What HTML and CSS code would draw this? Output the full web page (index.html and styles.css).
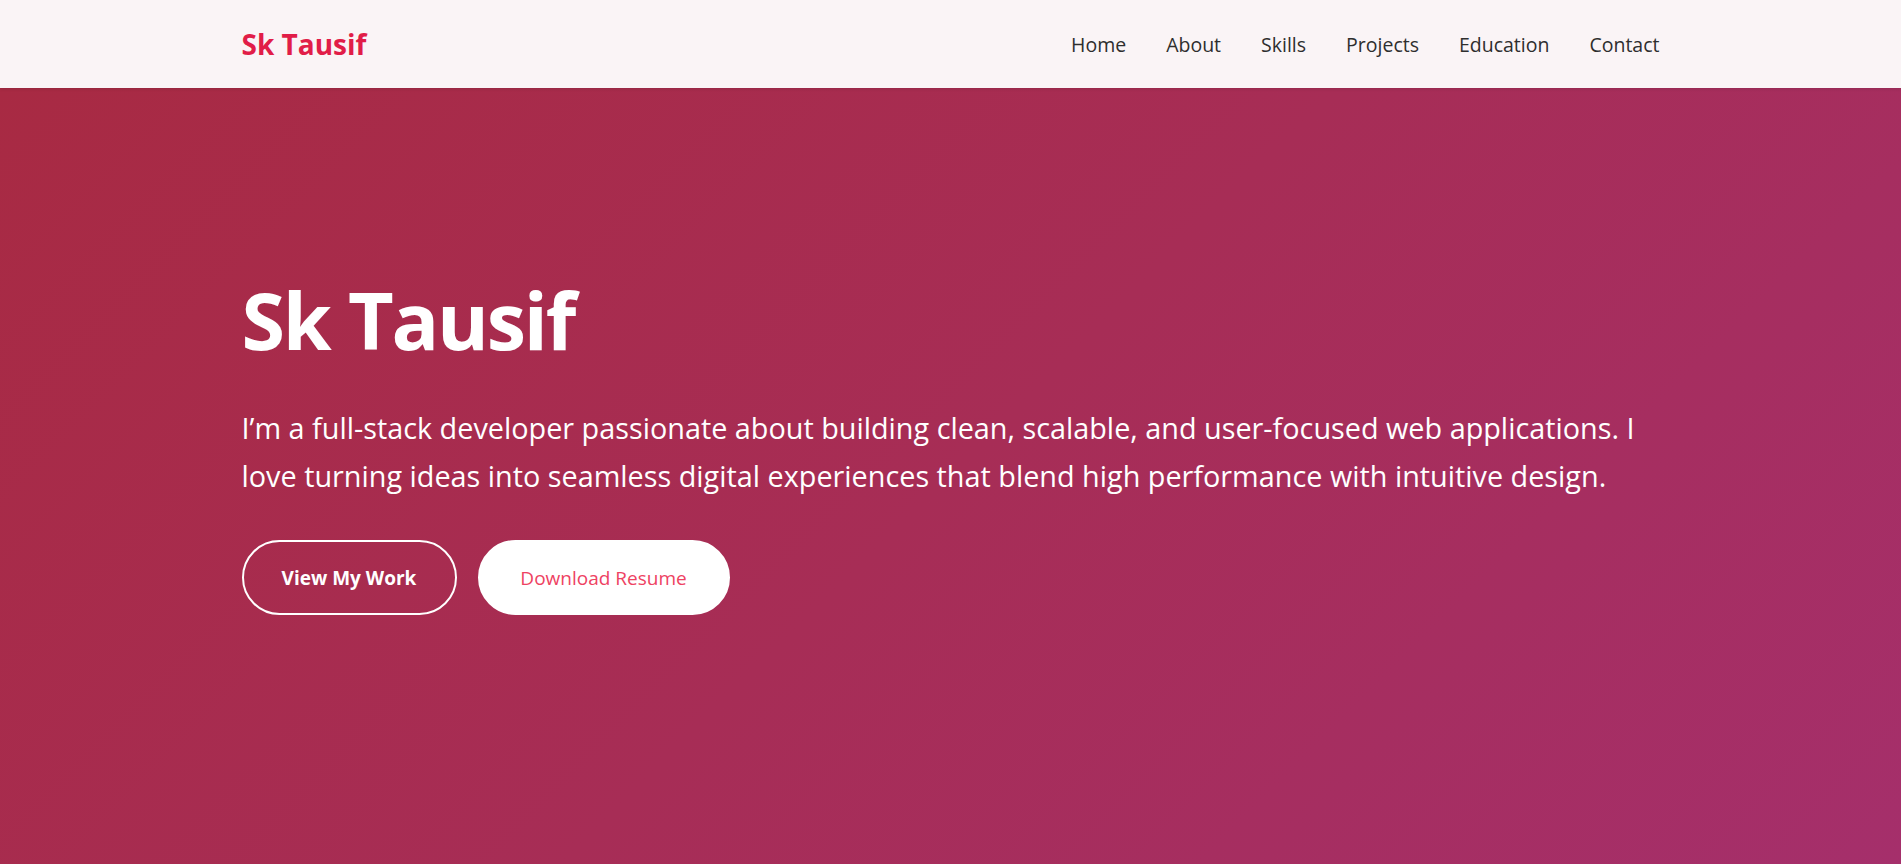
FILE: index.html
```html
<!DOCTYPE html>
<html lang="en">
<head>
<meta charset="UTF-8">
<title>Sk Tausif</title>
<link rel="stylesheet" href="styles.css">
</head>
<body>
<header class="navbar">
  <div class="nav-inner">
    <a class="logo" href="#">Sk Tausif</a>
    <nav class="nav-links">
      <a href="#">Home</a>
      <a href="#">About</a>
      <a href="#">Skills</a>
      <a href="#">Projects</a>
      <a href="#">Education</a>
      <a href="#">Contact</a>
    </nav>
  </div>
</header>
<section class="hero">
  <div class="hero-inner">
    <h1 class="hero-title">Sk Tausif</h1>
    <p class="hero-text">I’m a full-stack developer passionate about building clean, scalable, and user-focused web applications. I love turning ideas into seamless digital experiences that blend high performance with intuitive design.</p>
    <div class="hero-actions">
      <a class="btn btn-outline" href="#">View My Work</a>
      <a class="btn btn-solid" href="#">Download Resume</a>
    </div>
  </div>
</section>
</body>
</html>
```

FILE: styles.css
```css
* { box-sizing: border-box; }
html, body { margin: 0; padding: 0; }
body {
  font-family: "Open Sans", "Noto Sans", sans-serif;
  color: #333;
  overflow: hidden;
}
a { text-decoration: none; }

.navbar {
  height: 88px;
  background: #faf4f6;
  box-shadow: 0 1px 3px rgba(0, 0, 0, 0.12);
  position: relative;
  z-index: 2;
}
.nav-inner {
  width: 1418px;
  max-width: 100%;
  margin: 0 auto;
  height: 100%;
  display: flex;
  align-items: center;
  justify-content: space-between;
}
.logo {
  color: #e11d48;
  font-size: 28px;
  font-weight: 700;
}
.nav-links {
  display: flex;
  gap: 40px;
}
.nav-links a {
  color: #2e2e2e;
  font-size: 19.5px;
  font-weight: 500;
}

.hero {
  height: 776px;
  background: linear-gradient(135deg, #a82a43 0%, #a72d56 50%, #a52f6b 100%);
  color: #fff;
}
.hero-inner {
  width: 1418px;
  max-width: 100%;
  margin: 0 auto;
  padding-top: 184px;
}
.hero-title {
  margin: 0 0 36px;
  font-size: 79px;
  line-height: 96px;
  font-weight: 700;
  letter-spacing: -2.2px;
}
.hero-text {
  margin: 0;
  font-size: 28.8px;
  line-height: 48px;
}
.hero-actions {
  display: flex;
  gap: 21px;
  margin-top: 40px;
}
.btn {
  display: inline-flex;
  align-items: center;
  justify-content: center;
  height: 75px;
  padding: 0;
  border: 2px solid #fff;
  border-radius: 40px;
  font-size: 19px;
  white-space: nowrap;
}
.btn-outline {
  color: #fff;
  font-weight: 700;
  width: 215px;
}
.btn-solid {
  background: #fff;
  color: #ee4262;
  width: 252px;
}
```
